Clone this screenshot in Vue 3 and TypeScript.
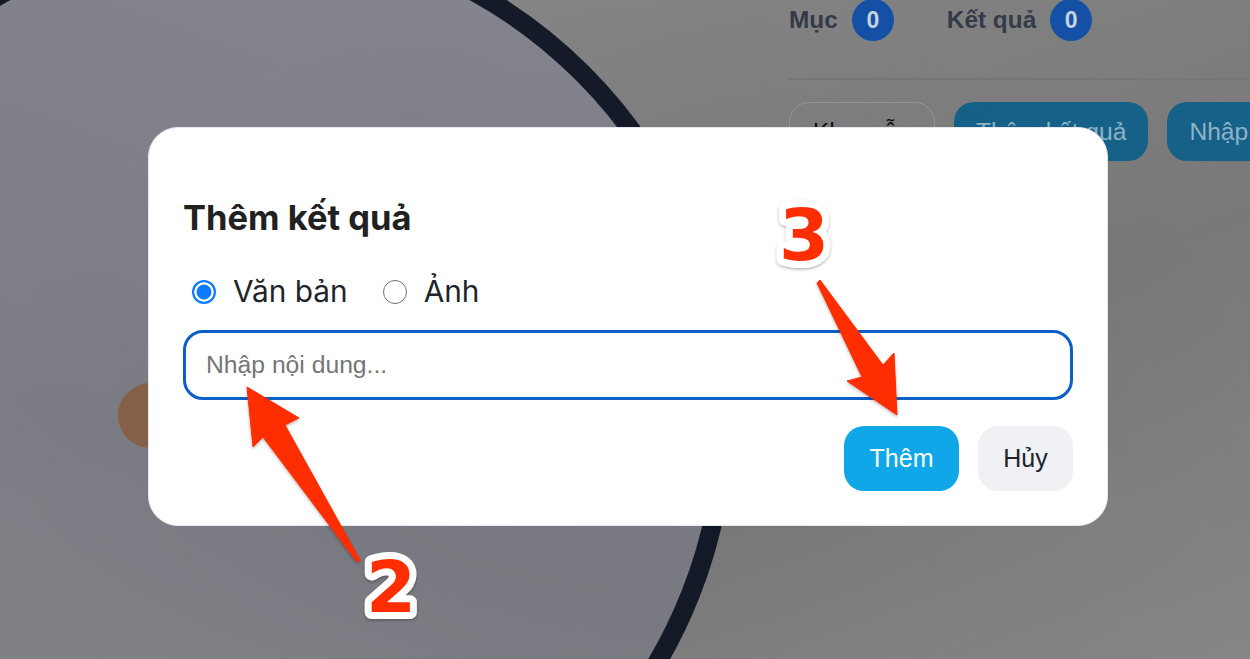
<script setup lang="ts">
import { ref } from "vue";

const kind = ref("text");
const content = ref("");
const counters = [
  { label: "Mục", value: 0 },
  { label: "Kết quả", value: 0 },
];
</script>

<template>
  <div class="page">
    <div class="stage">
      <div class="ring"></div>
      <div class="dot"></div>
    </div>
    <div class="side">
      <div class="counters">
        <div v-for="c in counters" :key="c.label" class="counter">
          <span class="counter-label">{{ c.label }}</span>
          <span class="badge">{{ c.value }}</span>
        </div>
      </div>
      <div class="side-actions">
        <button class="btn-outline">Kho mẫu</button>
        <button class="btn-blue">Thêm kết quả</button>
        <button class="btn-blue">Nhập</button>
      </div>
    </div>

    <div class="overlay">
      <div class="modal">
        <h2 class="modal-title">Thêm kết quả</h2>
        <div class="radios">
          <label class="radio">
            <input v-model="kind" type="radio" value="text" />
            <span>Văn bản</span>
          </label>
          <label class="radio">
            <input v-model="kind" type="radio" value="image" />
            <span>Ảnh</span>
          </label>
        </div>
        <input v-model="content" class="content-input" type="text" placeholder="Nhập nội dung..." />
        <div class="modal-actions">
          <button class="btn-add">Thêm</button>
          <button class="btn-cancel">Hủy</button>
        </div>
      </div>
    </div>

    <svg class="marks" width="1250" height="659" viewBox="0 0 1250 659">
      <defs>
        <filter id="soft" x="-20%" y="-20%" width="140%" height="140%">
          <feDropShadow dx="0" dy="1.5" stdDeviation="1.5" flood-color="#000" flood-opacity="0.3" />
        </filter>
      </defs>
      <g filter="url(#soft)" fill="#ff2d00" stroke="#ff2d00" stroke-width="1" stroke-linejoin="round">
        <path d="M247 387 L299 418 L285 425 L360 560 L357 562 L263 437 L253 447 Z" />
        <path d="M897 415 L847 381 L862 377 L817 283 L820 280 L883 365 L894 353 Z" />
      </g>
      <g class="num" filter="url(#soft)">
        <text x="391" y="612">2</text>
        <text x="804" y="260">3</text>
      </g>
    </svg>
  </div>
</template>

<style scoped>
.page {
  position: relative;
  width: 1250px;
  height: 659px;
  overflow: hidden;
  display: flex;
  background: linear-gradient(160deg, #8a8a8a 0%, #787878 60%, #868686 100%);
  font-family: "Liberation Sans", Arial, sans-serif;
}
.stage {
  position: relative;
  width: 789px;
  flex: none;
}
.ring {
  position: absolute;
  left: -254px;
  top: -78px;
  width: 988px;
  height: 988px;
  box-sizing: border-box;
  border: 19px solid #141a27;
  border-radius: 50%;
  background: linear-gradient(200deg, #85868f 0%, #7c7d84 55%, #85868a 100%);
}
.dot {
  position: absolute;
  left: 118px;
  top: 383px;
  width: 65px;
  height: 65px;
  border-radius: 50%;
  background: #87614a;
}
.side {
  position: relative;
  flex: 1;
  min-width: 0;
  display: flex;
  flex-direction: column;
}
.counters {
  display: flex;
  gap: 53px;
  margin-top: -1px;
  border-bottom: 2px solid #767676;
  box-sizing: border-box;
  height: 81px;
}
.counter {
  display: flex;
  align-items: flex-start;
  gap: 14px;
}
.counter-label {
  font-size: 24.4px;
  font-weight: 700;
  line-height: 42px;
  color: #353a49;
}
.badge {
  width: 42px;
  height: 42px;
  border-radius: 50%;
  background: #1350a6;
  color: #c9d2df;
  font-size: 23px;
  font-weight: 700;
  line-height: 42px;
  text-align: center;
}
.side-actions {
  display: flex;
  gap: 19px;
  margin-top: 22px;
  white-space: nowrap;
}
.side-actions button {
  height: 59px;
  flex: none;
  border-radius: 20px;
  font-family: inherit;
  font-size: 24.6px;
}
.btn-outline {
  width: 146px;
  background: transparent;
  border: 1.5px solid #959595;
  color: #111;
}
.btn-blue {
  padding: 0 22px;
  background: #156188;
  border: none;
  color: #8fb3c6;
}
.overlay {
  position: absolute;
  inset: 0;
  padding: 127px 0 0 148px;
  background: radial-gradient(ellipse at 50% 60%, rgba(0, 0, 0, 0.05), rgba(0, 0, 0, 0) 75%);
}
.modal {
  width: 960px;
  height: 399px;
  box-sizing: border-box;
  padding: 70px 34px 0;
  background: #fff;
  border: 1px solid #e6e8f0;
  border-radius: 30px;
}
.modal-title {
  margin: 0;
  font-family: Inter, sans-serif;
  font-size: 34.5px;
  font-weight: 700;
  line-height: 40px;
  color: #212121;
}
.radios {
  display: flex;
  gap: 35px;
  margin-top: 33px;
  padding-left: 9px;
}
.radio {
  display: flex;
  align-items: center;
  gap: 17px;
  font-family: Inter, sans-serif;
  font-size: 29.8px;
  line-height: 40px;
  color: #212529;
}
.radio input {
  appearance: none;
  width: 24px;
  height: 24px;
  margin: 2px 0 0;
  border: 1.5px solid #6f6f6f;
  border-radius: 50%;
  background: #fff;
}
.radio input:checked {
  border: 2px solid #0d7bff;
  background: #0d7bff;
  box-shadow: inset 0 0 0 2.5px #fff;
}
.content-input {
  display: block;
  width: 890px;
  height: 70px;
  margin: 19px 0 0;
  padding: 0 20px;
  box-sizing: border-box;
  border: 3.5px solid #0b5fc6;
  border-radius: 20px;
  outline: none;
  font-family: inherit;
  font-size: 24.7px;
  color: #212529;
}
.content-input::placeholder {
  color: #757575;
  opacity: 1;
}
.modal-actions {
  display: flex;
  justify-content: flex-end;
  gap: 19px;
  margin-top: 26px;
}
.modal-actions button {
  height: 65px;
  border: none;
  border-radius: 20px;
  font-family: inherit;
  font-size: 25px;
}
.btn-add {
  width: 115px;
  background: #10a7e9;
  color: #fff;
}
.btn-cancel {
  width: 95px;
  background: #f0f1f5;
  color: #212529;
}
.marks {
  position: absolute;
  left: 0;
  top: 0;
  pointer-events: none;
}
.num text {
  font-family: "DejaVu Sans", "Liberation Sans", sans-serif;
  font-size: 72px;
  font-weight: 700;
  text-anchor: middle;
  fill: #ff2d00;
  stroke: #fff;
  stroke-width: 14px;
  stroke-linejoin: round;
  paint-order: stroke fill;
}
</style>

<style>
html,
body {
  margin: 0;
  overflow: hidden;
}
</style>
